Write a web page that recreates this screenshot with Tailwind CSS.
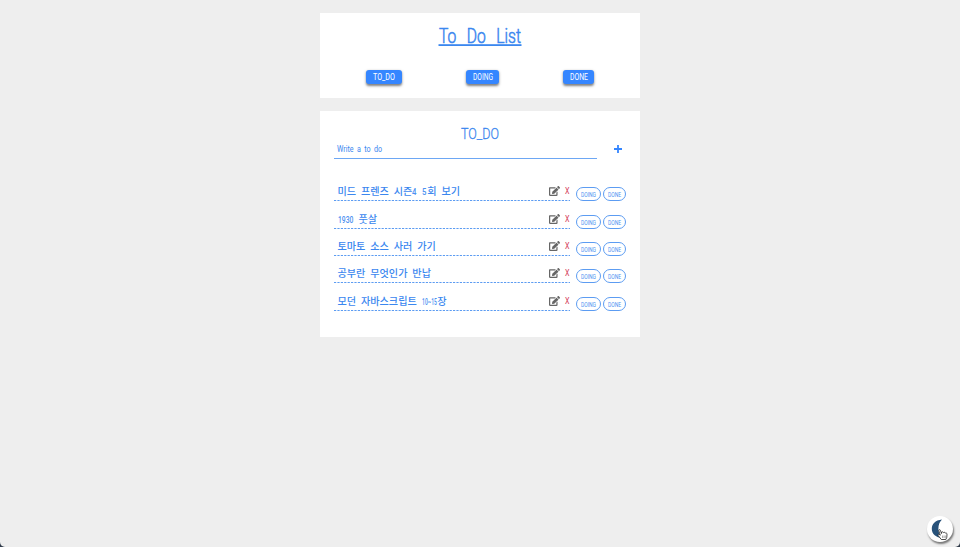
<!DOCTYPE html>
<html lang="ko">
<head>
<meta charset="utf-8">
<title>To Do List</title>
<script src="https://cdn.jsdelivr.net/npm/@tailwindcss/browser@4"></script>
</head>
<body class="bg-[#303b4a] font-['Liberation_Sans','Noto_Sans_CJK_KR',sans-serif] text-[#3b87ef]">
<main class="relative flex h-[547px] w-[960px] flex-col items-center gap-[13px] overflow-hidden rounded-b-[5px] bg-[#eeeeee] pt-[13px]">
  <header class="flex h-[85px] w-[320px] flex-col bg-white">
    <h1 class="mt-[11px] flex h-[36px] justify-center">
      <svg class="h-[36px] w-[84px] overflow-visible" viewBox="0 0 84 36" fill="#3b87ef" font-family="Roboto" font-weight="300" font-size="21" stroke="#3b87ef" stroke-width=".6">
        <text x="1" y="18.6" textLength="82" lengthAdjust="spacingAndGlyphs" word-spacing="9">To Do List</text>
        <rect x="0.5" y="20.2" width="83" height="1.8" stroke="none"/>
      </svg>
    </h1>
    <nav class="mt-[10px] flex pl-[46px]">
      <button class="flex h-[14px] w-[36px] items-center justify-center rounded-[3px] bg-[#3586ff] shadow-[0_1.5px_2.5px_rgba(0,0,0,0.5)]"><svg class="h-[14px] w-[24px] overflow-visible" fill="white" font-family="Roboto" font-size="8.5"><text x="1" y="10.2" textLength="22" lengthAdjust="spacingAndGlyphs">TO_DO</text></svg></button>
      <button class="ml-[64px] flex h-[14px] w-[33px] items-center justify-center rounded-[3px] bg-[#3586ff] shadow-[0_1.5px_2.5px_rgba(0,0,0,0.5)]"><svg class="h-[14px] w-[20px] overflow-visible" fill="white" font-family="Roboto" font-size="8.5"><text x="0" y="10.2" textLength="20" lengthAdjust="spacingAndGlyphs">DOING</text></svg></button>
      <button class="ml-[64px] flex h-[14px] w-[31px] items-center justify-center rounded-[3px] bg-[#3586ff] shadow-[0_1.5px_2.5px_rgba(0,0,0,0.5)]"><svg class="h-[14px] w-[18px] overflow-visible" fill="white" font-family="Roboto" font-size="8.5"><text x="0" y="10.2" textLength="18" lengthAdjust="spacingAndGlyphs">DONE</text></svg></button>
    </nav>
  </header>

  <section class="flex h-[226px] w-[320px] flex-col bg-white pr-[14px] pl-[14px]">
    <h2 class="mt-[14px] flex h-[17px] justify-center">
      <svg class="h-[17px] w-[38px] overflow-visible" fill="#3b87ef" font-family="Roboto" font-weight="300" font-size="15" stroke="#3b87ef" stroke-width=".3"><text x="0" y="13.5" textLength="38" lengthAdjust="spacingAndGlyphs">TO_DO</text></svg>
    </h2>
    <form class="flex h-[17px]">
      <div class="h-[17px] w-[263px] border-b border-[#6da7f4] pl-[3px]">
        <svg class="h-[15px] w-[48px] overflow-visible" fill="#3b87ef" font-family="Roboto" font-size="9"><text x="0" y="10.2" textLength="45" lengthAdjust="spacingAndGlyphs" word-spacing="2">Write a to do</text></svg>
      </div>
      <svg class="mt-[3px] ml-[17px] h-[8px] w-[8px]" viewBox="0 0 8 8"><path d="M4 0V8M0 4H8" stroke="#3586ff" stroke-width="1.8"/></svg>
    </form>
    <ul id="list" class="mt-[23.3px] flex flex-col gap-[8.4px]"></ul>
  </section>

  <button class="absolute top-[516px] left-[927px] flex h-[26px] w-[26px] items-center justify-center rounded-full bg-white shadow-[1px_2px_2px_rgba(0,0,0,0.5)]">
    <svg class="h-[26px] w-[26px]" viewBox="0 0 26 26">
      <path d="M15 3.5C8 4.2 4.8 8 4.8 13S9 21.7 15.5 22C12.6 19.4 11.4 16.8 11.4 12.8 11.4 8.8 12.5 6 15 3.5Z" fill="#28527a"/>
      <path d="M11.7 14.5c0-1 1.500-1.200 1.800 0l1 3 .1-1.300c.6-.7 1.600-.4 1.900.4.6-.6 1.500-.3 1.800.5.8-.4 1.700.1 1.700 1l-.2 3.200-1 2.200h-4.500l-3.200-4.100c-.5-.8.5-1.500 1.300-.9l.9.7z" fill="white" stroke="#222" stroke-width=".8" stroke-linejoin="round"/>
      <path d="M15.5 19.5v2.5M17 19.5v2.5M18.300 19.500v2.500" stroke="#555" stroke-width=".5"/>
    </svg>
  </button>
</main>
<script>
// Narrow digits, squeezed to a given width in pixels
const num = (t, w) => `<svg class="inline-block h-[9px] overflow-visible align-baseline" style="width:${w}px" fill="#4b91f1" font-family="Roboto" font-size="9.5"><text x="0" y="9" textLength="${w - 0.6}" lengthAdjust="spacingAndGlyphs">${t}</text></svg>`;
const items = [
  `미드 프렌즈 시즌${num('4', 5)} ${num('5', 5)}회 보기`,
  `${num('1930', 16)} 풋살`,
  '토마토 소스 사러 가기',
  '공부란 무엇인가 반납',
  `모던 자바스크립트 ${num('10~15', 15.5)}장`
];
document.getElementById('list').innerHTML = items.map(t => `
  <li class="flex h-[19px] items-start">
    <div class="flex h-[19px] w-[236px] shrink-0 pl-[3px]">
      <svg class="absolute mt-[18px] -ml-[3px] h-[1px] w-[236px]"><path d="M0 .5H236" stroke="#5c9cf2" stroke-width="1" stroke-dasharray="2.2 1.2"/></svg>
      <span class="h-[18px] w-[212px] text-[10.1px] leading-[18px] font-medium [word-spacing:2.1px] whitespace-nowrap pl-[0.5px] text-[#3b87ef] font-['Noto_Sans_CJK_KR',sans-serif]">${t}</span>
      <svg class="mt-[4px] h-[10px] w-[11px] shrink-0" viewBox="0 0 576 512" fill="#666"><path d="M402.6 83.2l90.2 90.2c3.8 3.8 3.8 10 0 13.8L274.4 405.6l-92.8 10.3c-12.4 1.4-22.9-9.1-21.5-21.5l10.3-92.8L388.8 83.2c3.8-3.8 10-3.8 13.8 0zm162-22.9l-48.8-48.8c-15.2-15.2-39.9-15.2-55.2 0l-35.4 35.4c-3.8 3.8-3.8 10 0 13.8l90.2 90.2c3.8 3.8 10 3.8 13.8 0l35.4-35.4c15.2-15.3 15.2-40 0-55.200zM384 346.200V448H64V128h229.800c3.200 0 6.200-1.300 8.500-3.500l40-40c7.600-7.600 2.200-20.500-8.500-20.500H48C21.500 64 0 85.500 0 112v352c0 26.500 21.500 48 48 48h352c26.500 0 48-21.500 48-48V306.200c0-10.700-12.900-16-20.500-8.500l-40 40c-2.200 2.300-3.500 5.300-3.500 8.500z"/></svg>
      <svg class="mt-[4px] ml-[4px] h-[10px] w-[6px] shrink-0 overflow-visible" fill="#d33b57" font-family="Roboto" font-size="9.5"><text x="1" y="7.5" textLength="4.5" lengthAdjust="spacingAndGlyphs">X</text></svg>
    </div>
    <button class="mt-[5px] ml-[6px] flex h-[14px] w-[25px] shrink-0 items-center justify-center rounded-full border border-[#5c9cf2]"><svg class="h-[12px] w-[15px] overflow-visible" fill="#4b91f1" font-family="Roboto" font-size="7"><text x="0" y="8.5" textLength="15" lengthAdjust="spacingAndGlyphs">DOING</text></svg></button>
    <button class="mt-[5px] ml-[2px] flex h-[14px] w-[23px] shrink-0 items-center justify-center rounded-full border border-[#5c9cf2]"><svg class="h-[12px] w-[13px] overflow-visible" fill="#4b91f1" font-family="Roboto" font-size="7"><text x="0" y="8.5" textLength="13" lengthAdjust="spacingAndGlyphs">DONE</text></svg></button>
  </li>`).join('');
</script>
</body>
</html>
